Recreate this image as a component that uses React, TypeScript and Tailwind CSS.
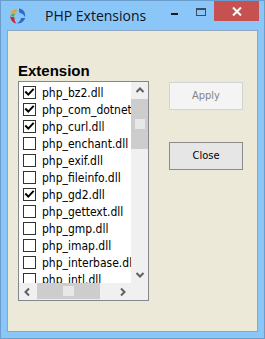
import React from "react";

const items: [string, boolean][] = [
  ["php_bz2.dll", true],
  ["php_com_dotnet.dll", true],
  ["php_curl.dll", true],
  ["php_enchant.dll", false],
  ["php_exif.dll", false],
  ["php_fileinfo.dll", false],
  ["php_gd2.dll", true],
  ["php_gettext.dll", false],
  ["php_gmp.dll", false],
  ["php_imap.dll", false],
  ["php_interbase.dll", false],
  ["php_intl.dll", false],
];

function Check({ checked }: { checked: boolean }) {
  return (
    <div className="w-[13px] h-[13px] border border-[#333333] bg-white shrink-0 relative">
      {checked && (
        <svg width="11" height="11" viewBox="0 0 11 11" className="absolute left-0 top-0">
          <path d="M2 5.2 L4.3 7.6 L9 2.6" stroke="#000" strokeWidth="2" fill="none" strokeLinecap="square" />
        </svg>
      )}
    </div>
  );
}

function Chevron({ dir }: { dir: "up" | "down" | "left" | "right" }) {
  const d =
    dir === "up"
      ? "M1.5 6 L5 2.5 L8.5 6"
      : dir === "down"
      ? "M1.5 3 L5 6.5 L8.5 3"
      : dir === "left"
      ? "M6 1.5 L2.5 5 L6 8.5"
      : "M3 1.5 L6.5 5 L3 8.5";
  return (
    <svg width="10" height="10" viewBox="0 0 10 10">
      <path d={d} stroke="#606060" strokeWidth="2" fill="none" />
    </svg>
  );
}

function Logo() {
  return (
    <svg width="18" height="18" viewBox="0 0 18 18">
      <path d="M8 2 C4 2 1.5 5 1.5 8 C3 6 5 5 7.5 5.2 Z" fill="#f2a022" />
      <path d="M10 1.5 C14.5 2 17 6 16 10 C15 8 13 6.2 10.2 5.8 Z" fill="#2a6fc4" />
      <path d="M16.2 11 C15 15 11 17 8 16.3 C10 15.2 11.5 13.5 12 11 Z" fill="#2a6fc4" />
      <path d="M1.2 9.5 C1.5 13 4 16 7.5 16.5 C6 15 5.2 13 5.5 10.5 Z" fill="#c8282e" />
      <path d="M1.3 8.8 C2.5 7 4.5 6.3 6.5 6.5 C5.5 7.5 5.2 8.5 5.3 9.8 Z" fill="#4caf50" />
    </svg>
  );
}

export default function App() {
  return (
    <div className="w-[265px] h-[339px] bg-[#8bc6f8] border border-[#6b9dcc] flex flex-col box-border overflow-hidden">
      {/* title bar */}
      <div className="h-[29px] flex items-start shrink-0">
        <div className="ml-[8px] mt-[6px]">
          <Logo />
        </div>
        <div
          className="ml-[18px] mt-[5px] text-[14px] leading-[19px] text-[#0c1520]"
          style={{ fontFamily: '"Open Sans", "Noto Sans", sans-serif' }}
        >
          PHP Extensions
        </div>
        <div className="flex-1" />
        <div className="mt-[12px] w-[7px] h-[2px] bg-[#1a1a1a]" />
        <div className="ml-[18px] mt-[7px] w-[10px] h-[8px] border border-[#3a4b5c] border-t-2" />
        <div className="ml-[8px] mr-[5px] w-[45px] h-[20px] bg-[#c75050] flex items-center justify-center">
          <svg width="10" height="9" viewBox="0 0 10 9">
            <path d="M1 0.5 L9 8.5 M9 0.5 L1 8.5" stroke="#fff" strokeWidth="2" />
          </svg>
        </div>
      </div>

      {/* client area */}
      <div className="mx-[6px] h-[302px] bg-[#ece9d8] border border-[#8fa5bd] flex items-start">
        <div className="ml-[10px] mt-[31px] flex flex-col">
          <div
            className="text-[15px] leading-[18px] font-bold text-black"
            style={{ fontFamily: '"Liberation Sans", Arial, sans-serif' }}
          >
            Extension
          </div>
          <div className="mt-[1px] w-[131px] h-[220px] border border-[#828790] bg-white grid grid-cols-[112px_17px] grid-rows-[201px_17px]">
            <div
              className="overflow-hidden pt-[2px] text-[12px] text-black"
              style={{ fontFamily: '"DejaVu Sans Condensed", "Liberation Sans", sans-serif' }}
            >
              {items.map(([name, checked]) => (
                <div key={name} className="h-[17px] flex items-center pl-[4px] gap-[6px] whitespace-nowrap">
                  <Check checked={checked} />
                  <span>{name}</span>
                </div>
              ))}
            </div>
            <div className="bg-[#f0f0f0] flex flex-col">
              <div className="h-[17px] flex items-center justify-center">
                <Chevron dir="up" />
              </div>
              <div className="h-[50px] bg-[#cdcdcd] flex items-center justify-center">
                <div className="w-[10px] h-[10px] bg-[#e8e8e8]" />
              </div>
              <div className="flex-1" />
              <div className="h-[17px] flex items-center justify-center">
                <Chevron dir="down" />
              </div>
            </div>
            <div className="bg-[#f0f0f0] flex">
              <div className="w-[17px] flex items-center justify-center">
                <Chevron dir="left" />
              </div>
              <div className="ml-[1px] w-[63px] h-[16px] bg-[#cdcdcd] flex items-center justify-center">
                <div className="w-[11px] h-[10px] bg-[#e8e8e8]" />
              </div>
              <div className="flex-1" />
              <div className="w-[17px] flex items-center justify-center">
                <Chevron dir="right" />
              </div>
            </div>
            <div className="bg-[#f0f0f0]" />
          </div>
        </div>
        <div
          className="ml-[20px] mt-[51px] flex flex-col text-[11px]"
          style={{ fontFamily: '"DejaVu Sans Condensed", "Liberation Sans", sans-serif' }}
        >
          <div className="w-[74px] h-[28px] border border-[#d2d2d2] bg-[#f4f4f4] text-[#838383] flex items-center justify-center">
            Apply
          </div>
          <div className="mt-[32px] w-[74px] h-[28px] border border-[#8c8c8c] bg-[#e6e6e6] text-black flex items-center justify-center">
            Close
          </div>
        </div>
      </div>
    </div>
  );
}
